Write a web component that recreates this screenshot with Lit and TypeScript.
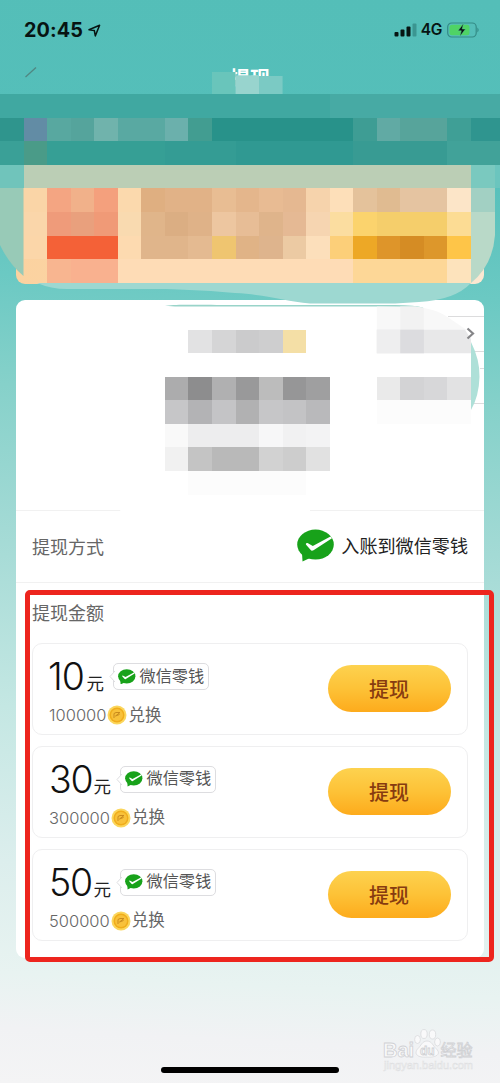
import { LitElement, html, css, svg } from 'lit';
import { customElement, property } from 'lit/decorators.js';

const CELL = 23.55;

// [column, row, columns wide, colour]; one row is one mosaic cell high
type Block = [number, number, number, string];

const BLOCKS: Block[] = [
  [0, 4, 14, '#40a8a1'], [14, 4, 8, '#47aaa4'],
  [0, 5, 1, '#2f958d'], [1, 5, 1, '#628ca5'], [2, 5, 1, '#58a8a0'], [3, 5, 1, '#55a49c'],
  [4, 5, 1, '#70b3ac'], [5, 5, 2, '#59a9a2'], [7, 5, 1, '#6bb0ac'], [8, 5, 1, '#429d91'],
  [9, 5, 6, '#28928a'], [15, 5, 1, '#3e9d94'], [16, 5, 1, '#61aaa4'], [17, 5, 2, '#57a49b'],
  [19, 5, 1, '#3f9f96'], [20, 5, 2, '#2f958f'],
  [0, 6, 1, '#3aa097'], [1, 6, 1, '#4a9b88'], [2, 6, 5, '#369f95'], [7, 6, 3, '#349c94'],
  [10, 6, 5, '#309992'], [15, 6, 4, '#389b93'], [19, 6, 3, '#41a299'],
  [0, 7, 1, '#70c4bb'], [1, 7, 19, '#bbceb5'], [20, 7, 1, '#7ac9bf'], [21, 7, 1, '#6bc5be'],
  [1, 8, 1, '#fad5a7'], [2, 8, 1, '#f4a582'], [3, 8, 1, '#f1b18a'], [4, 8, 1, '#f4a07d'],
  [5, 8, 1, '#fbd9ad'], [6, 8, 1, '#dfaf81'], [7, 8, 2, '#e1b287'], [9, 8, 1, '#e8bd93'],
  [10, 8, 1, '#e4b68c'], [11, 8, 1, '#e8bb93'], [12, 8, 1, '#e5b891'], [13, 8, 1, '#f6d3ac'],
  [14, 8, 1, '#fddfb9'], [15, 8, 1, '#e4c29b'], [16, 8, 1, '#e0bb91'], [17, 8, 2, '#e5c4a1'],
  [19, 8, 1, '#fce5c8'],
  [1, 9, 1, '#fad6aa'], [2, 9, 1, '#ef9b7a'], [3, 9, 1, '#e9a07d'], [4, 9, 1, '#f09a77'],
  [5, 9, 1, '#f9dab0'], [6, 9, 1, '#e0b58a'], [7, 9, 1, '#dbae83'], [8, 9, 1, '#dfb288'],
  [9, 9, 1, '#edc6a0'], [10, 9, 1, '#e7bd96'], [11, 9, 1, '#dfb48b'], [12, 9, 1, '#e5b994'],
  [13, 9, 1, '#f6d5b1'], [14, 9, 1, '#fbdda0'], [15, 9, 1, '#fbd36d'], [16, 9, 3, '#f5ce6b'],
  [19, 9, 1, '#fcdc94'],
  [1, 10, 1, '#fbd6a9'], [2, 10, 3, '#f46137'], [5, 10, 1, '#fddab0'], [6, 10, 2, '#e0b58b'],
  [8, 10, 1, '#e4ba91'], [9, 10, 1, '#efc570'], [10, 10, 1, '#e0b386'], [11, 10, 1, '#deb48d'],
  [12, 10, 1, '#eccaa3'], [13, 10, 1, '#fcdfbb'], [14, 10, 1, '#fccf79'], [15, 10, 1, '#eda826'],
  [16, 10, 1, '#de952a'], [17, 10, 1, '#d58c24'], [18, 10, 1, '#dd972b'], [19, 10, 1, '#fec548'],
  [2, 11, 1, '#f8b590'], [3, 11, 2, '#f9b18f'], [5, 11, 10, '#fedcb6'], [15, 11, 4, '#fdd797'],
  [19, 11, 1, '#fde3bc'],
  [8, 14, 1, '#e2e2e3'], [9, 14, 1, '#d5d5d6'], [10, 14, 1, '#cbcbcc'], [11, 14, 1, '#cececf'],
  [12, 14, 1, '#f4dfa6'],
  [7, 16, 1, '#acacad'], [8, 16, 1, '#8d8d8e'], [9, 16, 1, '#b0b0b1'], [10, 16, 1, '#99999a'],
  [11, 16, 1, '#bcbcbc'], [12, 16, 1, '#969697'], [13, 16, 1, '#9f9fa0'],
  [7, 17, 1, '#c6c6c8'], [8, 17, 1, '#b3b3b5'], [9, 17, 1, '#c4c4c6'], [10, 17, 1, '#b1b1b2'],
  [11, 17, 1, '#c6c6c8'], [12, 17, 1, '#c3c3c5'], [13, 17, 1, '#b9b9bb'],
  [7, 18, 1, '#f9f9f9'], [8, 18, 3, '#ededee'], [11, 18, 1, '#f7f7f8'], [12, 18, 1, '#f1f1f2'],
  [13, 18, 1, '#f3f3f4'],
  [7, 19, 1, '#f1f1f1'], [8, 19, 1, '#c4c4c4'], [9, 19, 2, '#b9b9b9'], [11, 19, 1, '#d2d2d2'],
  [12, 19, 1, '#cdcdcd'], [13, 19, 1, '#e1e1e1'],
  [8, 20, 5, '#fcfcfc'],
  [16, 16, 1, '#eaeaea'], [17, 16, 1, '#d3d3d5'], [18, 16, 1, '#d7d7d9'], [19, 16, 1, '#e2e2e3'],
  [16, 17, 4, '#fcfcfc'],
];

const bubble = (size: number) => html`
  <svg width=${size} height=${size * 0.87} viewBox="0 0 38 33">
    <ellipse cx="18.500" cy="15.500" rx="18.300" ry="15" fill="#18a21a"/>
    <path d="M5 24L5.500 32.500L14 28.500Z" fill="#18a21a"/>
    <path d="M9 14.500C9.500 13.700 10.200 13.700 11 14.300L15.800 17L33.500 7.500L35 9.300L16.500 21.300C15.200 22 14.200 21.900 13.500 20.800L9.300 16C8.800 15.400 8.700 15 9 14.500Z" fill="#fff"/>
  </svg>`;

@customElement('withdraw-option')
class WithdrawOption extends LitElement {
  @property() amount = '';
  @property() coins = '';

  static styles = css`
    :host { display: block; }
    .card { box-sizing: border-box; height: 92px; border: 1.5px solid #efeff0; border-radius: 10px;
      display: flex; justify-content: space-between; padding: 13px 16.5px 0 16px; }
    .top { display: flex; height: 42px; }
    .num { box-sizing: border-box; width: 43.5px; font: 350 37.5px/39px Inter, sans-serif; letter-spacing: -1.2px; color: #111; }
    .one { width: 36.5px; letter-spacing: -1px; text-indent: -1px; }
    .unit { font-size: 17.5px; line-height: 53px; color: #222; margin-left: 1px; }
    .tag { box-sizing: border-box; position: relative; margin: 6px 0 0 8.500px; height: 27px; width: 96px;
      border: 1.2px solid #dddde0; border-radius: 5px; display: flex; align-items: center;
      gap: 4px; padding-left: 4px; font-size: 16.2px; color: #555; white-space: nowrap; }
    .label { line-height: 24px; margin-top: -2px; }
    .tip { position: absolute; left: -5px; top: 7px; }
    .rate { display: flex; align-items: center; height: 24px; margin-top: 4px; color: #666; font-size: 16.5px; }
    .coins { font: 350 16.5px/24px Inter, sans-serif; color: #666; }
    .one-coins { letter-spacing: 0; }
    .coin { margin: 0 1px; }
    .change { line-height: 24px; margin-top: -1px; }
    .btn { width: 123px; height: 47px; margin-top: 8px; border: 0; border-radius: 24px; padding: 0;
      background: linear-gradient(#fdd24f, #fdc237 50%, #fdab1c); color: #873b10;
      font: 500 20px/45px "Noto Sans CJK SC", sans-serif; }
  `;

  render() {
    return html`
      <div class="card">
        <div>
          <div class="top">
            <span class="num ${this.amount === '10' ? 'one' : ''}">${this.amount}</span><span class="unit">元</span>
            <span class="tag">
              <svg class="tip" width="6" height="11" viewBox="0 0 6 11">
                <path d="M6 0L1 5.500L6 11" fill="#fff" stroke="#dddde0"/>
              </svg>
              ${bubble(18)}<span class="label">微信零钱</span>
            </span>
          </div>
          <div class="rate">
            <span class="coins">${this.coins}</span>
            <svg class="coin" width="20" height="20" viewBox="0 0 20 20">
              <circle cx="10" cy="10" r="9.500" fill="#fbd65c"/>
              <circle cx="10" cy="10" r="7.500" fill="#f0ad1b"/>
              <circle cx="10" cy="10" r="6" fill="#f8c13a"/>
              <path d="M7 13V8.500L9 7.500H13L8.500 11L12.500 9.500" fill="none" stroke="#c98b1d" stroke-width="1"/>
            </svg>
            <span class="change">兑换</span>
          </div>
        </div>
        <button class="btn">提现</button>
      </div>`;
  }
}

@customElement('app-root')
class AppRoot extends LitElement {
  static styles = css`
    :host { display: block; width: 500px; height: 1083px; position: relative; overflow: hidden;
      font-family: Inter, "Noto Sans CJK SC", sans-serif;
      background: linear-gradient(183deg, #54beb8 0, #55bfba 15%, #6bc9c3 27%, #86d1ca 37%, #a3dad5 50%, #c4e7e3 66%, #dceeed 80%, #e8f3f1 90%, #f1f2f4 95%, #f4f4f5 100%); }
    .status { display: flex; justify-content: space-between; align-items: center; height: 60px; padding: 0 20px 0 24px; }
    .left, .right { display: flex; align-items: center; }
    .time { font: 700 19.8px/60px Inter, sans-serif; color: #071412; letter-spacing: 0.1px; }
    .arrow { margin-left: 5px; }
    .net { font: 600 15.500px/60px Inter, sans-serif; color: #071412; margin: 0 5px 0 4px; letter-spacing: -0.3px; }
    .nav { height: 43px; text-align: center; color: #fff; font-size: 20px; font-weight: 700; line-height: 39px; }
    .banner { height: 181px; margin: 0 16px; border-radius: 9px; background: linear-gradient(90deg, #fbd2a0 0, #fbd7aa 50%, #fbe8d2 100%); }
    .panel { margin: 16px 16px 0; height: 658px; border-radius: 9px; background: #fff; display: flex; flex-direction: column; }
    .summary { height: 210px; border-bottom: 1px solid #f1f1f1; }
    .method { height: 71px; border-bottom: 1px solid #f1f1f1; display: flex; align-items: center; padding: 0 16px; font-size: 18px; color: #666; }
    .method span { position: relative; top: -0.5px; }
    .wallet { margin-left: auto; display: flex; align-items: center; gap: 6px; color: #222; font-size: 18.1px; }
    .heading { height: 60px; line-height: 62px; padding-left: 16px; font-size: 18px; color: #666; }
    .list { display: flex; flex-direction: column; gap: 10.800px; padding: 0 16px; }
    .layer { position: absolute; left: 0; top: 0; pointer-events: none; }
    .frame { position: absolute; box-sizing: border-box; left: 25px; top: 590px; width: 469px; height: 372px; border: 5.500px solid #ed251e; border-radius: 5px; }
    .home { position: absolute; left: 161px; top: 1067px; width: 178px; height: 6px; border-radius: 3px; background: #000; }
    .mark { font: 700 20px "Liberation Sans", "Noto Sans CJK SC", sans-serif; fill: #f9f9fa; stroke: #d0d1d4; stroke-width: 0.8px; }
    .cn { font: 400 16px "Noto Sans CJK SC", sans-serif; }
    .du { font-size: 12px; }
    .url { font: 400 11px "Liberation Sans", sans-serif; fill: #f5f5f6; stroke: #dedfe1; stroke-width: 0.5px; }
  `;

  private mosaic() {
    return svg`
      <path d="M0 188H23.500V276Q9 264 0 245Z" fill="#98cab7"/>
      <path d="M471 188H495V212H471Z" fill="#a2d0c3"/>
      <path d="M471 212H495V235Q493 265 471 283Z" fill="#b9d9c8"/>
      <path d="M37 283H471Q455 300 419 302L395 303.500H310C285 301 270 295 235 293C200 290 180 289 140 289H67Q51 289 37 283Z" fill="#9dd8d1"/>
      <path d="M165 305.800C180 304.300 190 305 230 305H395Q415 305 425 308Q405 306.500 375 306.500H175Z" fill="#99d4c9"/>
      <path d="M376.800 306.500H415Q437 309 449 318Q462 327 467 330H376.800Z" fill="#f8f8f8"/>
      <path d="M400.300 306.500H415L423.900 308V330H400.300Z" fill="#f2f2f2"/>
      <path d="M448 316.500H484M473 351.500H484M480 368.500H484M474 403.500H484" stroke="#dcdcdd" fill="none"/>
      <path d="M376.800 329.700H465L471 339V353.300H376.800Z" fill="#e8e8e9"/>
      <path d="M376.800 329.700H400.300V353.300H376.800Z" fill="#eeeeef"/>
      <path d="M400.300 329.700H423.900V353.300H400.300Z" fill="#dcdcdf"/>
      <path d="M471 342Q480 360 479.500 377Q479 396 471 410Z" fill="#aee0d8"/>
      <path d="M467.500 328.500L473 333.500L467.500 338.500" fill="none" stroke="#858588" stroke-width="2.200"/>
      <path d="M212 72H235.500V94.500H212Z" fill="#69c5bb"/>
      <path d="M235.500 75.300H259V94.500H235.500Z" fill="#98d4ce"/>
      <path d="M259 76H282.600V94.500H259Z" fill="#7bcac4"/>
      <path d="M25.500 77L36 67.500" stroke="#508782" stroke-width="1.300"/>
      <path d="M115 505H310V521H130Z" fill="#fff"/>
      ${BLOCKS.map(([c, r, w, fill]) => svg`
        <rect x=${c * CELL} y=${r * CELL} width=${w * CELL} height=${CELL} fill=${fill} shape-rendering="crispEdges"/>`)}
    `;
  }

  render() {
    return html`
      <div class="status">
        <div class="left">
          <span class="time">20:45</span>
          <svg class="arrow" width="13" height="13" viewBox="0 0 13 13">
            <path d="M1 5.800L11.600 1.200L7.300 11.900L6.300 6.500Z" fill="none" stroke="#071412" stroke-width="1.500" stroke-linejoin="round"/>
          </svg>
        </div>
        <div class="right">
          <svg width="23" height="14" viewBox="0 0 23 14">
            <rect x="0.500" y="9" width="4" height="4.500" rx="1" fill="#071412"/>
            <rect x="6.500" y="6.500" width="4" height="7" rx="1" fill="#071412"/>
            <rect x="12.500" y="3.500" width="4" height="10" rx="1" fill="#071412"/>
            <rect x="18.500" y="0.500" width="4" height="13" rx="1" fill="#3b9691"/>
          </svg>
          <span class="net">4G</span>
          <svg width="33" height="16" viewBox="0 0 33 16">
            <rect x="0.700" y="1" width="28.500" height="14" rx="4" fill="none" stroke="#348b86" stroke-width="1.200"/>
            <rect x="2.500" y="2.700" width="20" height="10.600" rx="2.500" fill="#4fd365"/>
            <path d="M30.500 5.500Q32.500 8 30.500 10.500Z" fill="#287a76"/>
            <path d="M16.500 1.500L11 8.800H14.300L12.800 14.500L18.500 7H15.200Z" fill="#071412" stroke="#57c995" stroke-width="0.500"/>
          </svg>
        </div>
      </div>
      <div class="nav">提现</div>
      <div class="banner"></div>
      <div class="panel">
        <div class="summary"></div>
        <div class="method">
          <span>提现方式</span>
          <span class="wallet">${bubble(38)}<span>入账到微信零钱</span></span>
        </div>
        <div class="heading">提现金额</div>
        <div class="list">
          <withdraw-option amount="10" coins="100000"></withdraw-option>
          <withdraw-option amount="30" coins="300000"></withdraw-option>
          <withdraw-option amount="50" coins="500000"></withdraw-option>
        </div>
      </div>
      <svg class="layer" width="500" height="1083" viewBox="0 0 500 1083">
        ${this.mosaic()}
        <text class="mark" x="383" y="1057">Bai</text>
        <g fill="#f9f9fa" stroke="#d6d7da" stroke-width="0.700">
          <ellipse cx="417.500" cy="1039.500" rx="2.900" ry="4"/>
          <ellipse cx="424" cy="1034" rx="3.200" ry="4.500"/>
          <ellipse cx="432.500" cy="1034.500" rx="3.200" ry="4.500"/>
          <ellipse cx="437.500" cy="1042" rx="2.900" ry="4"/>
          <path d="M427 1041C422 1041 421 1046 418 1048.500C413 1054 418 1058 427 1057C436 1058 442 1054 436 1048.500C433 1046 432 1041 427 1041Z"/>
        </g>
        <text class="mark du" x="420" y="1055">du</text>
        <text class="mark cn" x="440.500" y="1055.500">经验</text>
        <text class="url" x="384" y="1069" textLength="89">jingyan.baidu.com</text>
      </svg>
      <div class="frame"></div>
      <div class="home"></div>
    `;
  }
}
